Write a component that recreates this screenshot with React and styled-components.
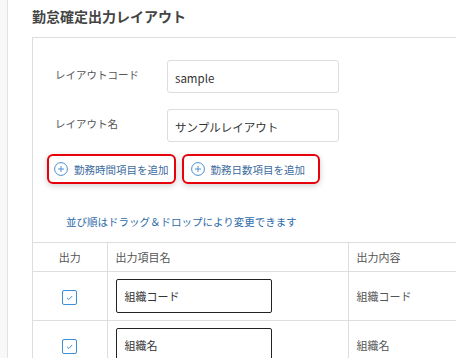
import React from "react";
import styled, { createGlobalStyle } from "styled-components";

const Global = createGlobalStyle`
  html, body { margin: 0; padding: 0; background: #fff; overflow: hidden; }
  body { font-family: "Noto Sans CJK JP", "Noto Sans", sans-serif; color: #555; }
`;

const Page = styled.div`
  display: flex;
  width: 456px;
  height: 358px;
  overflow: hidden;
`;

const Side = styled.div`
  width: 7px;
  flex: none;
  background: #f8f8f8;
  border-right: 1px solid #e2e2e2;
`;

const Main = styled.div`
  flex: none;
  padding: 6px 0 0 24px;
`;

const Title = styled.h1`
  margin: 0 0 10px 0;
  font-size: 14px;
  font-weight: 700;
  color: #444;
  line-height: 21px;
`;

const Card = styled.div`
  width: 520px;
  border: 1px solid #ddd;
  border-right: none;
  padding-top: 22px;
`;

const Form = styled.div`
  padding-left: 22px;
  display: flex;
  flex-direction: column;
  gap: 16px;
`;

const Field = styled.div`
  display: flex;
  align-items: center;
`;

const Label = styled.label`
  width: 112px;
  font-size: 10.5px;
  color: #555;
  margin-top: -4px;
`;

const Input = styled.div`
  width: 172px;
  height: 33px;
  box-sizing: border-box;
  border: 1px solid #ddd;
  border-radius: 3px;
  padding: 0 7px;
  display: flex;
  align-items: center;
  padding-top: 2px;
  font-size: 11.5px;
  color: #333;
`;

const Buttons = styled.div`
  display: flex;
  gap: 6px;
  margin-left: 14px;
  margin-top: 12px;
`;

const AddButton = styled.button`
  display: flex;
  align-items: center;
  gap: 6px;
  height: 30px;
  box-sizing: border-box;
  padding: 0 ${(p) => p.$padRight}px 0 ${(p) => p.$padLeft}px;
  border: 2px solid #e8000b;
  border-radius: 6px;
  background: #fff;
  box-shadow: 0 2px 6px rgba(0, 0, 0, 0.18);
  font-family: inherit;
  font-size: 10.5px;
  color: #3c6b9e;
  white-space: nowrap;
  cursor: pointer;
`;

const Info = styled.p`
  margin: 30px 0 0 33px;
  font-size: 10.5px;
  color: #2f6ba8;
  line-height: 16px;
`;

const Table = styled.table`
  margin-top: 12px;
  border-collapse: collapse;
  width: 100%;
  table-layout: fixed;
`;

const Th = styled.th`
  height: 29px;
  box-sizing: border-box;
  border-top: 1px solid #ddd;
  border-right: 1px solid #ddd;
  font-size: 11px;
  font-weight: 400;
  color: #555;
  text-align: ${(p) => (p.$center ? "center" : "left")};
  padding: 0 8px;
`;

const Td = styled.td`
  height: 49px;
  box-sizing: border-box;
  border-top: 1px solid #ddd;
  border-right: 1px solid #ddd;
  font-size: 11px;
  color: #555;
  text-align: ${(p) => (p.$center ? "center" : "left")};
  padding: 0 8px;
  vertical-align: middle;
`;

const Check = styled.span`
  display: inline-flex;
  align-items: center;
  justify-content: center;
  width: 15px;
  height: 15px;
  box-sizing: border-box;
  border: 1px solid #3a8fd6;
  border-radius: 2px;
  vertical-align: middle;
`;

const NameInput = styled.div`
  width: 156px;
  height: 34px;
  box-sizing: border-box;
  border: 1px solid #222;
  border-radius: 2px;
  display: flex;
  align-items: center;
  padding: 0 8px;
  font-size: 11px;
  color: #333;
`;

const PlusIcon = () => (
  <svg width="14" height="14" viewBox="0 0 14 14">
    <circle cx="7" cy="7" r="6.4" fill="none" stroke="#4a90d0" strokeWidth="1" />
    <path d="M7 4v6M4 7h6" stroke="#4a90d0" strokeWidth="1" />
  </svg>
);

const CheckMark = () => (
  <svg width="9" height="9" viewBox="0 0 9 9">
    <path d="M2 4.8l1.8 1.7L7.2 3" fill="none" stroke="#3a8fd6" strokeWidth="1" />
  </svg>
);

const rows = [
  { name: "組織コード", content: "組織コード" },
  { name: "組織名", content: "組織名" },
];

export default function App() {
  return (
    <>
      <Global />
      <Page>
        <Side />
        <Main>
          <Title>勤怠確定出力レイアウト</Title>
          <Card>
            <Form>
              <Field>
                <Label>レイアウトコード</Label>
                <Input>sample</Input>
              </Field>
              <Field>
                <Label>レイアウト名</Label>
                <Input>サンプルレイアウト</Input>
              </Field>
            </Form>
            <Buttons>
              <AddButton $padLeft={5} $padRight={5}>
                <PlusIcon />
                勤務時間項目を追加
              </AddButton>
              <AddButton $padLeft={7} $padRight={13}>
                <PlusIcon />
                勤務日数項目を追加
              </AddButton>
            </Buttons>
            <Info>並び順はドラッグ＆ドロップにより変更できます</Info>
            <Table>
              <colgroup>
                <col style={{ width: "74px" }} />
                <col style={{ width: "241px" }} />
                <col />
              </colgroup>
              <thead>
                <tr>
                  <Th $center>出力</Th>
                  <Th>出力項目名</Th>
                  <Th>出力内容</Th>
                </tr>
              </thead>
              <tbody>
                {rows.map((r) => (
                  <tr key={r.name}>
                    <Td $center>
                      <Check>
                        <CheckMark />
                      </Check>
                    </Td>
                    <Td>
                      <NameInput>{r.name}</NameInput>
                    </Td>
                    <Td>{r.content}</Td>
                  </tr>
                ))}
              </tbody>
            </Table>
          </Card>
        </Main>
      </Page>
    </>
  );
}
